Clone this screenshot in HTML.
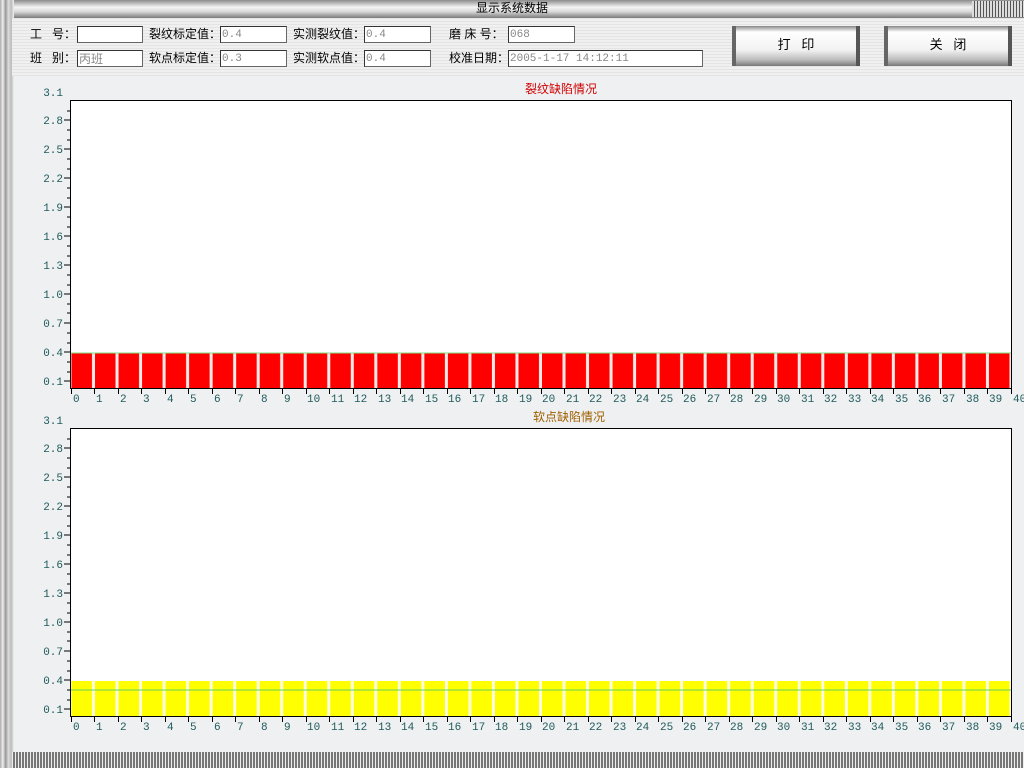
<!DOCTYPE html>
<html><head><meta charset="utf-8"><style>
body{margin:0;width:1024px;height:768px;overflow:hidden;background:#eef0f2;font-family:"Liberation Sans","Noto Sans CJK SC",sans-serif;position:relative}
.a{position:absolute}
.title{left:0;top:0;width:1024px;height:18px;background:linear-gradient(#8c8c8c,#f4f4f4 40%,#d8d8d8 65%,#7a7a7a);font-size:12px;text-align:center;line-height:17px;color:#000}
.hdr{left:12px;top:18px;width:1012px;height:58px;background:repeating-linear-gradient(#e4e4e4 0 1px,#f0f0f0 1px 3px)}
.lbl{font-size:12px;color:#000;white-space:pre}
.in{background:#fff;border:1px solid #333;border-right-color:#666;border-bottom-color:#666;height:17px;box-sizing:border-box;font-family:"Liberation Mono","Noto Sans CJK SC",monospace;font-size:11px;color:#888;line-height:16px;padding-left:1px}
.btn{height:40px;width:128px;background:linear-gradient(#888,#fff 15%,#f2f2f2 60%,#bbb 85%,#777);border-left:4px solid #666;border-right:4px solid #555;box-sizing:border-box;font-size:13px;text-align:center;line-height:38px;white-space:pre}
</style></head><body>
<div class="a title">显示系统数据</div>
<div class="a" style="left:0;top:0;width:14px;height:768px;background:linear-gradient(90deg,#aaa,#eee 20%,#999 40%,#ddd 60%,#bbb 80%,#eef0f2)"></div>
<div class="a" style="left:972px;top:1px;width:52px;height:16px;background:repeating-linear-gradient(90deg,#ddd 0 2px,#555 2px 3px)"></div>
<div class="a hdr"></div>
<div class="a lbl" style="left:30px;top:25px">工   号：</div>
<div class="a in" style="left:77px;top:26px;width:66px"></div>
<div class="a lbl" style="left:30px;top:49px">班   别：</div>
<div class="a in" style="left:77px;top:50px;width:66px;font-family:'Liberation Sans','Noto Sans CJK SC',sans-serif;font-size:12px">丙班</div>
<div class="a lbl" style="left:149px;top:25px">裂纹标定值：</div>
<div class="a in" style="left:220px;top:26px;width:67px">0.4</div>
<div class="a lbl" style="left:149px;top:49px">软点标定值：</div>
<div class="a in" style="left:220px;top:50px;width:67px">0.3</div>
<div class="a lbl" style="left:293px;top:25px">实测裂纹值：</div>
<div class="a in" style="left:364px;top:26px;width:67px">0.4</div>
<div class="a lbl" style="left:293px;top:49px">实测软点值：</div>
<div class="a in" style="left:364px;top:50px;width:67px">0.4</div>
<div class="a lbl" style="left:449px;top:25px">磨 床 号：</div>
<div class="a in" style="left:508px;top:26px;width:67px">068</div>
<div class="a lbl" style="left:449px;top:49px">校准日期：</div>
<div class="a in" style="left:508px;top:50px;width:195px">2005-1-17 14:12:11</div>
<div class="a btn" style="left:732px;top:26px">打   印</div>
<div class="a btn" style="left:884px;top:26px">关   闭</div>
<div class="a" style="left:12px;top:752px;width:1012px;height:16px;background:repeating-linear-gradient(90deg,#eee 0 1px,#777 1px 3px)"></div>
<svg class="a" style="left:0;top:0" width="1024" height="768" font-family="Liberation Mono,monospace" font-size="11">
<defs>
<pattern id="pr" patternUnits="userSpaceOnUse" x="71" y="0" width="23.525" height="10"><rect width="23.525" height="10" fill="#fde8e8"/><rect x="0.5" width="20.5" height="10" fill="#ff0000"/></pattern>
<pattern id="py" patternUnits="userSpaceOnUse" x="71" y="0" width="23.525" height="10"><rect width="23.525" height="10" fill="#fffde0"/><rect x="0.5" width="20.5" height="10" fill="#ffff00"/></pattern>
</defs>
<rect x="70.5" y="100.5" width="941" height="288" fill="#fff" stroke="#000"/>
<rect x="71" y="353" width="940" height="35" fill="url(#pr)"/>
<line x1="71" y1="353" x2="1011" y2="353" stroke="#80e080"/>
<rect x="70.5" y="428.5" width="941" height="288" fill="#fff" stroke="#000"/>
<rect x="71" y="681" width="940" height="35" fill="url(#py)"/>
<line x1="71" y1="690" x2="1011" y2="690" stroke="#60d060"/>
<text x="561" y="93" fill="#d00000" font-family="Liberation Sans,Noto Sans CJK SC,sans-serif" font-size="12" text-anchor="middle">裂纹缺陷情况</text>
<text x="569" y="421" fill="#a06000" font-family="Liberation Sans,Noto Sans CJK SC,sans-serif" font-size="12" text-anchor="middle">软点缺陷情况</text>
<g stroke="#000">
<path d="M64 352H71M64 381H71M64 323H71M64 294H71M64 265H71M64 236H71M64 207H71M64 178H71M64 149H71M64 120H71M67 372H71M67 362H71M67 343H71M67 333H71M67 313H71M67 304H71M67 285H71M67 275H71M67 256H71M67 246H71M67 227H71M67 217H71M67 198H71M67 188H71M67 169H71M67 159H71M67 140H71M67 130H71M67 111H71"/>
<path transform="translate(0,328)" d="M64 352H71M64 381H71M64 323H71M64 294H71M64 265H71M64 236H71M64 207H71M64 178H71M64 149H71M64 120H71M67 372H71M67 362H71M67 343H71M67 333H71M67 313H71M67 304H71M67 285H71M67 275H71M67 256H71M67 246H71M67 227H71M67 217H71M67 198H71M67 188H71M67 169H71M67 159H71M67 140H71M67 130H71M67 111H71"/>
</g>
<g fill="#1f5a5a" text-anchor="end">
<text x="63" y="96">3.1</text><text x="63" y="124">2.8</text><text x="63" y="153">2.5</text><text x="63" y="182">2.2</text><text x="63" y="211">1.9</text><text x="63" y="240">1.6</text><text x="63" y="269">1.3</text><text x="63" y="298">1.0</text><text x="63" y="327">0.7</text><text x="63" y="356">0.4</text><text x="63" y="385">0.1</text>
<text x="63" y="424">3.1</text><text x="63" y="452">2.8</text><text x="63" y="481">2.5</text><text x="63" y="510">2.2</text><text x="63" y="539">1.9</text><text x="63" y="568">1.6</text><text x="63" y="597">1.3</text><text x="63" y="626">1.0</text><text x="63" y="655">0.7</text><text x="63" y="684">0.4</text><text x="63" y="713">0.1</text>
</g>
<g fill="#1f5a5a">
<text y="402"><tspan x="73">0</tspan><tspan x="96">1</tspan><tspan x="120">2</tspan><tspan x="143">3</tspan><tspan x="167">4</tspan><tspan x="190">5</tspan><tspan x="214">6</tspan><tspan x="237">7</tspan><tspan x="261">8</tspan><tspan x="284">9</tspan><tspan x="307">10</tspan><tspan x="331">11</tspan><tspan x="354">12</tspan><tspan x="378">13</tspan><tspan x="401">14</tspan><tspan x="425">15</tspan><tspan x="448">16</tspan><tspan x="472">17</tspan><tspan x="495">18</tspan><tspan x="519">19</tspan><tspan x="542">20</tspan><tspan x="566">21</tspan><tspan x="589">22</tspan><tspan x="613">23</tspan><tspan x="636">24</tspan><tspan x="660">25</tspan><tspan x="683">26</tspan><tspan x="707">27</tspan><tspan x="730">28</tspan><tspan x="754">29</tspan><tspan x="777">30</tspan><tspan x="801">31</tspan><tspan x="824">32</tspan><tspan x="848">33</tspan><tspan x="871">34</tspan><tspan x="895">35</tspan><tspan x="918">36</tspan><tspan x="942">37</tspan><tspan x="966">38</tspan><tspan x="989">39</tspan><tspan x="1013">40</tspan></text>
<text y="730"><tspan x="73">0</tspan><tspan x="96">1</tspan><tspan x="120">2</tspan><tspan x="143">3</tspan><tspan x="167">4</tspan><tspan x="190">5</tspan><tspan x="214">6</tspan><tspan x="237">7</tspan><tspan x="261">8</tspan><tspan x="284">9</tspan><tspan x="307">10</tspan><tspan x="331">11</tspan><tspan x="354">12</tspan><tspan x="378">13</tspan><tspan x="401">14</tspan><tspan x="425">15</tspan><tspan x="448">16</tspan><tspan x="472">17</tspan><tspan x="495">18</tspan><tspan x="519">19</tspan><tspan x="542">20</tspan><tspan x="566">21</tspan><tspan x="589">22</tspan><tspan x="613">23</tspan><tspan x="636">24</tspan><tspan x="660">25</tspan><tspan x="683">26</tspan><tspan x="707">27</tspan><tspan x="730">28</tspan><tspan x="754">29</tspan><tspan x="777">30</tspan><tspan x="801">31</tspan><tspan x="824">32</tspan><tspan x="848">33</tspan><tspan x="871">34</tspan><tspan x="895">35</tspan><tspan x="918">36</tspan><tspan x="942">37</tspan><tspan x="966">38</tspan><tspan x="989">39</tspan><tspan x="1013">40</tspan></text>
</g>
<path stroke="#000" d="M71.5 388v6M94.5 388v6M118.5 388v6M141.5 388v6M165.5 388v6M188.5 388v6M212.5 388v6M235.5 388v6M259.5 388v6M282.5 388v6M306.5 388v6M329.5 388v6M353.5 388v6M376.5 388v6M400.5 388v6M423.5 388v6M447.5 388v6M470.5 388v6M494.5 388v6M517.5 388v6M541.5 388v6M564.5 388v6M588.5 388v6M611.5 388v6M635.5 388v6M658.5 388v6M682.5 388v6M705.5 388v6M729.5 388v6M752.5 388v6M776.5 388v6M799.5 388v6M823.5 388v6M846.5 388v6M870.5 388v6M893.5 388v6M917.5 388v6M940.5 388v6M964.5 388v6M987.5 388v6M1011.5 388v6"/>
<path stroke="#000" transform="translate(0,328)" d="M71.5 388v6M94.5 388v6M118.5 388v6M141.5 388v6M165.5 388v6M188.5 388v6M212.5 388v6M235.5 388v6M259.5 388v6M282.5 388v6M306.5 388v6M329.5 388v6M353.5 388v6M376.5 388v6M400.5 388v6M423.5 388v6M447.5 388v6M470.5 388v6M494.5 388v6M517.5 388v6M541.5 388v6M564.5 388v6M588.5 388v6M611.5 388v6M635.5 388v6M658.5 388v6M682.5 388v6M705.5 388v6M729.5 388v6M752.5 388v6M776.5 388v6M799.5 388v6M823.5 388v6M846.5 388v6M870.5 388v6M893.5 388v6M917.5 388v6M940.5 388v6M964.5 388v6M987.5 388v6M1011.5 388v6"/>
</svg>
</body></html>
